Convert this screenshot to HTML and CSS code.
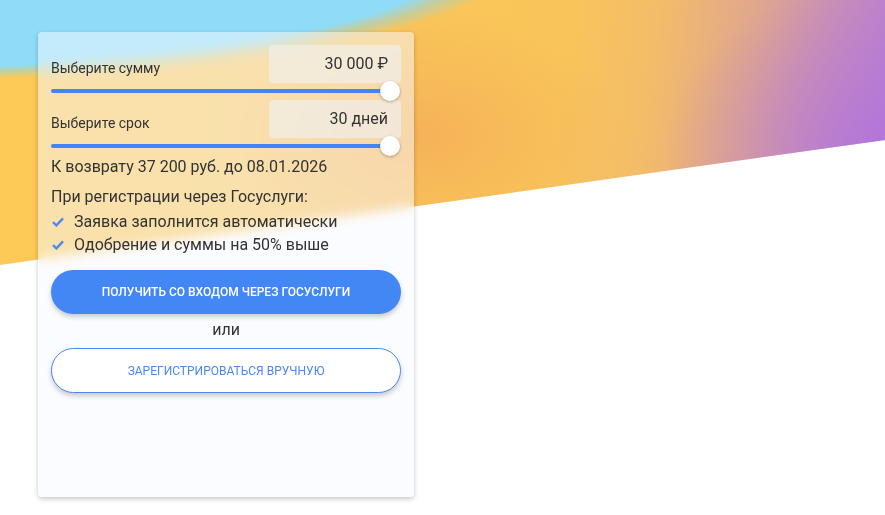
FILE: index.html
```html
<!DOCTYPE html>
<html lang="ru">
<head>
<meta charset="utf-8">
<link rel="stylesheet" href="styles.css">
</head>
<body>
<div class="hero-bg"></div>
<main class="card">
  <div class="field">
    <span class="field-label">Выберите сумму</span>
    <div class="field-value">30 000 ₽</div>
  </div>
  <div class="slider"><div class="track"><div class="fill"></div></div><div class="thumb"></div></div>
  <div class="field">
    <span class="field-label">Выберите срок</span>
    <div class="field-value">30 дней</div>
  </div>
  <div class="slider"><div class="track"><div class="fill"></div></div><div class="thumb"></div></div>
  <p class="summary">К возврату 37 200 руб. до 08.01.2026</p>
  <p class="intro">При регистрации через Госуслуги:</p>
  <ul class="benefits">
    <li><svg class="check" viewBox="0 0 12 10" width="12" height="10"><path d="M1 5.2 L4.4 8.4 L11 1.4" fill="none" stroke="#4a8cf0" stroke-width="2.4"/></svg>Заявка заполнится автоматически</li>
    <li><svg class="check" viewBox="0 0 12 10" width="12" height="10"><path d="M1 5.2 L4.4 8.4 L11 1.4" fill="none" stroke="#4a8cf0" stroke-width="2.4"/></svg>Одобрение и суммы на 50% выше</li>
  </ul>
  <button class="btn btn-primary">Получить со входом через Госуслуги</button>
  <div class="or">или</div>
  <button class="btn btn-outline">Зарегистрироваться вручную</button>
</main>
</body>
</html>
```
FILE: styles.css
```css
* { box-sizing: border-box; }
html, body { margin: 0; padding: 0; }
body {
  width: 885px;
  height: 515px;
  overflow: hidden;
  background: #fff;
  font-family: Roboto, "Liberation Sans", sans-serif;
  color: #333;
  position: relative;
}
.hero-bg {
  position: absolute;
  left: 0; top: 0;
  width: 885px; height: 265px;
  clip-path: polygon(0 0, 100% 0, 100% 140px, 0 100%);
  background:
    radial-gradient(ellipse 629px 115px at -150px -40px, #8edcf8 0, #8edcf8 95%, rgba(170,210,190,0.7) 100%, rgba(142,220,248,0) 106%),
    radial-gradient(ellipse 200px 130px at 420px 135px, rgba(244,170,88,0.7), rgba(244,172,92,0) 100%),
    radial-gradient(ellipse 220px 170px at 885px 150px, rgba(176,114,222,0.75), rgba(176,114,222,0) 100%),
    linear-gradient(97deg, #fdca57 0%, #f9c55a 62%, #f3bc69 72%, #dfa68f 83%, #c78eb8 92%, #b57bd6 100%);
}
.card {
  position: relative;
  margin: 32px 0 0 38px;
  width: 376px;
  height: 465px;
  padding: 13px 13px 0 13px;
  border-radius: 4px;
  background: rgba(248, 250, 255, 0.5);
  backdrop-filter: blur(6px);
  box-shadow: 0 2px 5px rgba(0,0,0,0.22);
  display: flex;
  flex-direction: column;
}
.field {
  display: flex;
  justify-content: space-between;
  align-items: center;
  height: 38px;
}
.field-label {
  font-size: 14px;
  padding-top: 7px;
  color: #333;
}
.field-value {
  width: 132px;
  height: 38px;
  border-radius: 4px;
  background: rgba(240, 242, 245, 0.6);
  font-size: 16px;
  line-height: 38px;
  text-align: right;
  padding-right: 13px;
  color: #333;
}
.slider {
  position: relative;
  height: 17px;
}
.track {
  position: absolute;
  left: 0; right: 0;
  top: 6px;
  height: 4px;
  border-radius: 2px;
  background: rgba(200, 205, 215, 0.7);
}
.fill {
  height: 4px;
  width: 97%;
  border-radius: 2px;
  background: #4286f5;
}
.thumb {
  position: absolute;
  left: 329px;
  top: -2px;
  width: 20px;
  height: 20px;
  border-radius: 50%;
  background: #fff;
  box-shadow: 0 1px 3px rgba(0,0,0,0.3);
}
.summary {
  margin: 2px 0 0;
  font-size: 16px;
  line-height: 20px;
}
.intro {
  margin: 10px 0 0;
  font-size: 16px;
  line-height: 20px;
}
.benefits {
  list-style: none;
  margin: 3px 0 0;
  padding: 0;
}
.benefits li {
  display: flex;
  align-items: center;
  font-size: 16px;
  line-height: 23px;
}
.check {
  margin: 0 10px 0 1px;
  flex: none;
}
.btn {
  display: block;
  width: 350px;
  font-family: Roboto, "Liberation Sans", sans-serif;
  font-size: 12px;
  font-weight: 500;
  text-transform: uppercase;
  border-radius: 23px;
  cursor: pointer;
  box-shadow: 0 3px 5px rgba(0,0,0,0.2);
}
.btn-primary {
  margin-top: 14px;
  height: 44px;
  border: none;
  background: #4387f5;
  color: #fff;
}
.btn-outline {
  margin-top: 8px;
  height: 45px;
  border: 1px solid #4a88f0;
  background: #fff;
  color: #4a88f0;
  font-weight: 400;
}
.or {
  margin-top: 6px;
  text-align: center;
  font-size: 16px;
  line-height: 20px;
}
```
